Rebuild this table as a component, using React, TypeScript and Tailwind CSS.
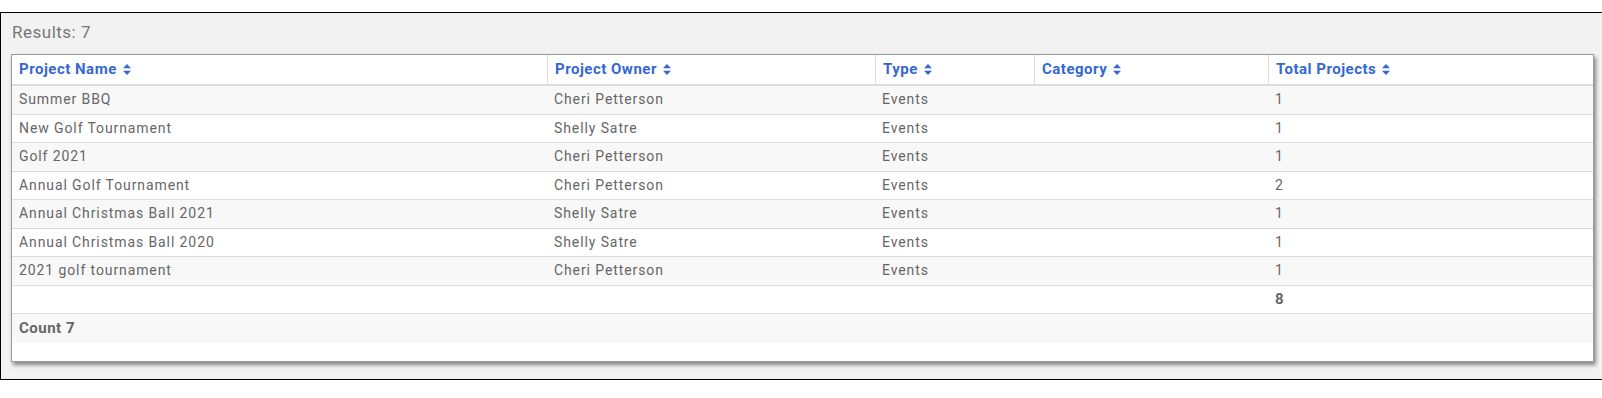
import React from 'react';

const rows = [
  { name: 'Summer BBQ', owner: 'Cheri Petterson', type: 'Events', category: '', total: 1 },
  { name: 'New Golf Tournament', owner: 'Shelly Satre', type: 'Events', category: '', total: 1 },
  { name: 'Golf 2021', owner: 'Cheri Petterson', type: 'Events', category: '', total: 1 },
  { name: 'Annual Golf Tournament', owner: 'Cheri Petterson', type: 'Events', category: '', total: 2 },
  { name: 'Annual Christmas Ball 2021', owner: 'Shelly Satre', type: 'Events', category: '', total: 1 },
  { name: 'Annual Christmas Ball 2020', owner: 'Shelly Satre', type: 'Events', category: '', total: 1 },
  { name: '2021 golf tournament', owner: 'Cheri Petterson', type: 'Events', category: '', total: 1 },
];

const columns = ['Project Name', 'Project Owner', 'Type', 'Category', 'Total Projects'];

const grid = 'grid grid-cols-[535px_328px_159px_234px_1fr]';

const SortIcon = () => (
  <svg width="8" height="11" viewBox="0 0 8 11" className="ml-[6px] inline-block">
    <path d="M4 0 L8 4.3 H0 Z" fill="currentColor" />
    <path d="M4 11 L8 6.7 H0 Z" fill="currentColor" />
  </svg>
);

export default function App() {
  const total = rows.reduce((s, r) => s + r.total, 0);

  return (
    <div className="bg-white pt-[12px] font-['Roboto',sans-serif]">
      <div className="h-[368px] border-y border-l border-black bg-[#f2f2f2] pl-[10px]">
        <div className="pt-[9px] pb-[11px] pl-[1px] text-[17px] leading-[21px] tracking-[0.5px] text-[#777]">
          Results: {rows.length}
        </div>

        <div className="w-[1583px] border border-[#999] bg-white pb-[18px] shadow-[2px_3px_4px_rgba(0,0,0,0.45)]">
          {/* Header */}
          <div className={`${grid} h-[31px] border-b-2 border-[#ddd]`}>
            {columns.map((c, i) => (
              <div
                key={c}
                className={`flex items-center px-[7px] text-[15px] font-bold tracking-[0.5px] text-[#3567d3] ${i > 0 ? 'border-l border-[#ddd]' : ''}`}
              >
                {c}
                <SortIcon />
              </div>
            ))}
          </div>

          {rows.map((r, i) => (
            <div
              key={r.name}
              className={`${grid} h-[28.5px] border-b border-[#ddd] text-[14px] tracking-[0.9px] text-[#666] ${i % 2 === 0 ? 'bg-[#f8f8f8]' : 'bg-white'}`}
            >
              <div className="flex items-center px-[7px]">{r.name}</div>
              <div className="flex items-center px-[7px]">{r.owner}</div>
              <div className="flex items-center px-[7px]">{r.type}</div>
              <div className="flex items-center px-[7px]">{r.category}</div>
              <div className="flex items-center px-[7px]">{r.total}</div>
            </div>
          ))}

          {/* Totals */}
          <div className={`${grid} h-[28.5px] border-b border-[#ddd] bg-white text-[15px] font-bold tracking-[0.5px] text-[#666]`}>
            <div />
            <div />
            <div />
            <div />
            <div className="flex items-center px-[7px]">{total}</div>
          </div>

          <div className="flex h-[28.5px] items-center bg-[#f8f8f8] px-[7px] text-[15px] font-bold tracking-[0.5px] text-[#666]">
            Count {rows.length}
          </div>
        </div>
      </div>
    </div>
  );
}
